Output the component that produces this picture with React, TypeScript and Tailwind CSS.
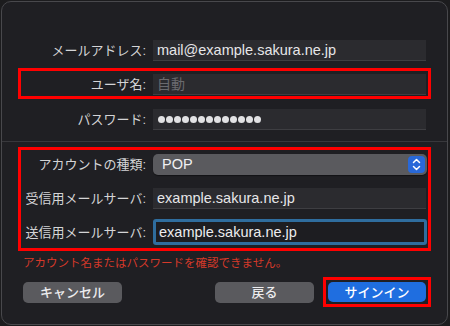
import React from "react";

const font = { fontFamily: '"Liberation Sans", "Noto Sans CJK JP", sans-serif' };

function Field({ label, children }: { label: string; children: React.ReactNode }) {
  return (
    <div className="flex items-center gap-[7px]">
      <div className="w-[125px] text-right text-[13px] leading-none text-[#d4d4d6] whitespace-nowrap">{label}</div>
      {children}
    </div>
  );
}

function TextBox({ value, placeholder }: { value?: string; placeholder?: string }) {
  return (
    <div className="w-[273px] h-[21px] bg-[#2b2b2f] border-b border-[#3e3e42] flex items-center px-[4px] text-[14.5px] leading-none">
      {value ? <span className="text-[#e6e6e8]">{value}</span> : <span className="text-[#6a6a6e] text-[14px]">{placeholder}</span>}
    </div>
  );
}

function Group({ boxed, className, children }: { boxed?: boolean; className?: string; children: React.ReactNode }) {
  return (
    <div className={"ml-[16px] w-[413px] border-[3px] " + (boxed ? "border-[#ff0000] " : "border-transparent ") + (className ?? "")}>
      {children}
    </div>
  );
}

export default function App() {
  return (
    <div className="w-[450px] h-[326px] bg-[#1c1c1e] p-[1px]" style={font}>
      <div className="w-[447px] h-[324px] rounded-[10px] border border-[#48484c] bg-[#1f1f23] flex flex-col pt-[32px]">
        <Group className="pt-[3px] pb-[1px]">
          <Field label="メールアドレス:">
            <TextBox value="mail@example.sakura.ne.jp" />
          </Field>
        </Group>
        <Group boxed className="mt-[3px] pt-[3px] pb-[1px]">
          <Field label="ユーザ名:">
            <TextBox placeholder="自動" />
          </Field>
        </Group>
        <Group className="mt-[4px] pt-[3px] pb-[1px]">
          <Field label="パスワード:">
            <div className="w-[273px] h-[21px] bg-[#2b2b2f] border-b border-[#3e3e42] flex items-center gap-[1px] px-[5px]">
              {Array.from({ length: 13 }).map((_, i) => (
                <span key={i} className="w-[7px] h-[7px] rounded-full bg-[#e2e2e4]" />
              ))}
            </div>
          </Field>
        </Group>
        <div className="mt-[7px] h-px bg-[#38383c]" />
        <Group boxed className="mt-[5px] pt-[4px] pb-[3px] flex flex-col">
          <Field label="アカウントの種類:">
            <div className="w-[274px] h-[21px] rounded-[5px] bg-[#5a5a5e] flex items-center justify-between pl-[9px] pr-[2px] text-[14.5px] leading-none text-[#f0f0f2] shadow-[0_1px_1px_rgba(0,0,0,0.4)]">
              <span>POP</span>
              <span className="w-[17px] h-[17px] rounded-[4px] bg-[#2868d8] flex items-center justify-center">
                <svg width="9" height="13" viewBox="0 0 9 13" fill="none" stroke="#ffffff" strokeWidth="1.5" strokeLinecap="round" strokeLinejoin="round">
                  <path d="M1.5 4.5 L4.5 1.5 L7.5 4.5" />
                  <path d="M1.5 8.5 L4.5 11.5 L7.5 8.5" />
                </svg>
              </span>
            </div>
          </Field>
          <div className="mt-[13px]">
            <Field label="受信用メールサーバ:">
              <TextBox value="example.sakura.ne.jp" />
            </Field>
          </div>
          <div className="mt-[10px]">
            <Field label="送信用メールサーバ:">
              <div className="w-[274px] h-[26px] rounded-[3px] border-[3px] border-[#2f6d9e] bg-[#1d1d21] flex items-center px-[3px] text-[14.5px] leading-none text-[#ececee]">
                example.sakura.ne.jp
              </div>
            </Field>
          </div>
        </Group>
        <div className="mt-[4px] ml-[21px] text-[11.5px] leading-[16px] text-[#d6392a]">
          アカウント名またはパスワードを確認できません。
        </div>
        <div className="mt-[6px] ml-[21px] mr-[16px] flex items-center">
          <button className="w-[99px] h-[21px] rounded-[5px] bg-[#5a5a5e] text-[13px] font-medium leading-none text-[#ececee]">キャンセル</button>
          <div className="flex-1" />
          <button className="w-[99px] h-[21px] rounded-[5px] bg-[#5a5a5e] text-[13px] font-medium leading-none text-[#ececee]">戻る</button>
          <div className="ml-[9px] w-[108px] h-[30px] border-[3px] border-[#ff0000] flex items-center justify-center">
            <button className="w-[98px] h-[20px] rounded-[5px] bg-[#1f6ee0] text-[13px] font-medium leading-none text-white">サインイン</button>
          </div>
        </div>
      </div>
    </div>
  );
}
